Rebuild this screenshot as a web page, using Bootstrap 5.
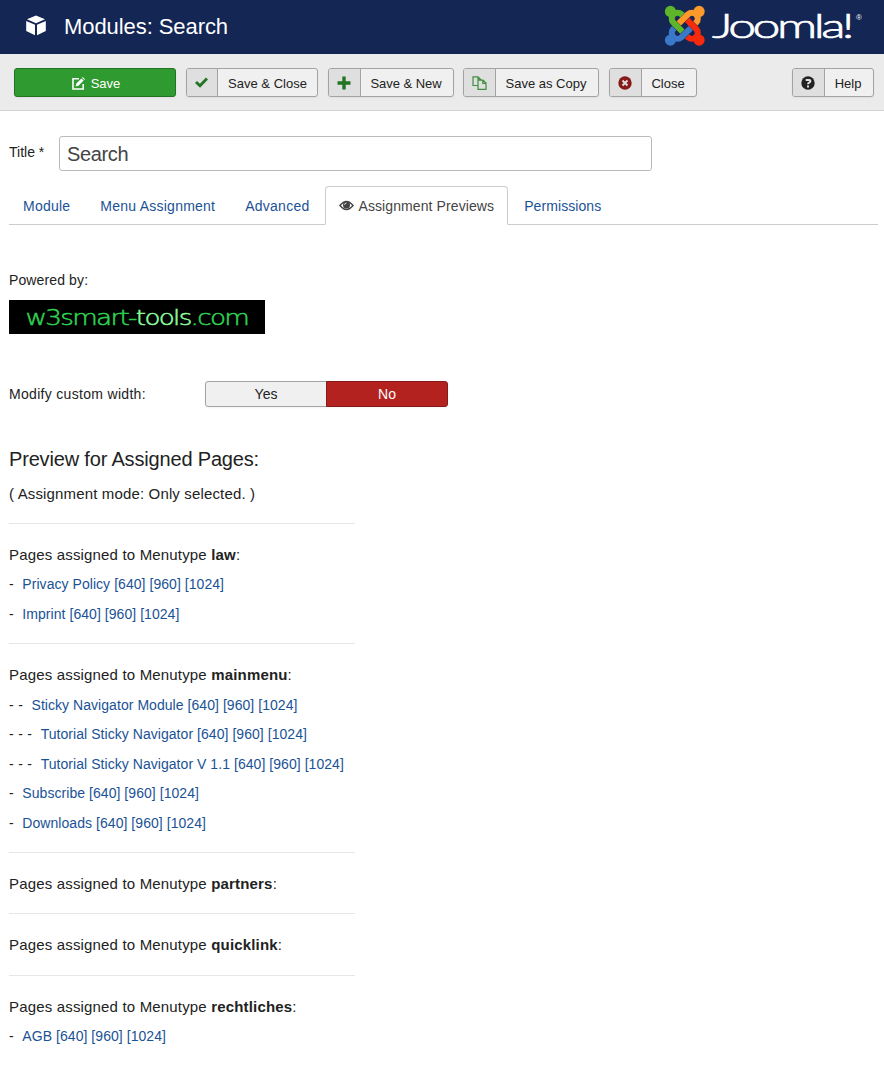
<!DOCTYPE html>
<html lang="en">
<head>
<meta charset="utf-8">
<meta name="viewport" content="width=device-width, initial-scale=1">
<title>Modules: Search</title>
<link href="https://cdn.jsdelivr.net/npm/bootstrap@5.3.0/dist/css/bootstrap.min.css" rel="stylesheet">
<style>
body{font-family:"Liberation Sans",Arial,sans-serif;font-size:14px;color:#222;background:#fff;overflow:hidden}
a{color:#1a5296;text-decoration:none}
svg{display:block}
.admin-header{height:54px;background:#142654;padding:0 22px 0 25px}
.admin-header h1{font-size:22px;color:#fff;line-height:54px;letter-spacing:-.07px;margin-left:18px}
.toolbar{height:57px;background:#ebebeb;border-bottom:1px solid #d3d3d3;padding:14px 10px 0 14px;gap:10px}
.tool{--bs-btn-font-size:13px;height:29px;padding:0;border:1px solid #a3a3a3;border-radius:3px;background:#f0f0f0;color:#222;display:flex;overflow:hidden;box-shadow:0 1px 2px rgba(0,0,0,.05);line-height:29px}
.tool .glyph{width:32px;background:#dfdfdf;border-right:1px solid #a3a3a3;display:flex;align-items:center;justify-content:center;padding-right:1px}
.tool .caption{flex:1;text-align:center;padding-right:2px}
.tool-save{width:162px;background:#2f9a2f;border-color:#237523;color:#fff;justify-content:center;align-items:center;gap:6px;padding:1px 0 0 2px}
.w-close2{width:132px}.w-new{width:126px;letter-spacing:-.05px}.w-copy{width:136px;margin-left:-1px}.w-close{width:88px}.w-help{width:82px}
.w-close2 .glyph{width:31px}
.w-close2 .caption{padding-right:0}
.title-row{padding:25px 0 0 9px}
.title-row label{width:50px;line-height:33px}
.title-row input{width:593px;height:35px;font-size:20px;color:#444;border:1px solid #bbb;border-radius:3px;padding:2px 7px 0;letter-spacing:-.35px}
.edit-tabs{margin:15px 6px 0 9px;height:39px;--bs-nav-tabs-border-color:#ccc;--bs-nav-tabs-border-radius:4px;gap:2px}
.edit-tabs .nav-link{height:39px;padding:0 13px;line-height:39px;color:#1a5296;letter-spacing:.24px}
.edit-tabs .nav-link.active{color:#444;border-color:#ccc #ccc #fff;display:flex;align-items:center;gap:4px;letter-spacing:.1px}
.edit-tabs .nav-link.active span{padding-top:2px}
.edit-tabs li:last-child .nav-link{letter-spacing:.08px}
.pane{padding:0 9px}
.powered{margin-top:45px;line-height:21px;letter-spacing:.12px}
.brand-strip{width:256px;height:34px;margin-top:9px;background:#000}
.width-row{margin-top:47px;line-height:26px}
.width-row .lbl{width:196px;letter-spacing:.31px}
.switch-pair{width:243px;height:26px;border-radius:3px;box-shadow:0 1px 2px rgba(0,0,0,.05)}
.switch-pair .btn{--bs-btn-font-size:14px;padding:0;line-height:25px;border-radius:3px;width:121px}
.opt-yes{background:#f0f0f0;border:1px solid #a3a3a3;color:#222}
.opt-no{background:#b3221f;border:1px solid #861a17;color:#fff}
.pane h2{font-size:20px;line-height:24px;margin:40px 0 0;letter-spacing:-.17px}
.mode{font-size:15px;line-height:22px;margin:12px 0 17.700px;letter-spacing:.15px}
.menu-group{width:346px;border-top:1px solid #e6e6e6;padding:16px 0 14.900px;line-height:29.500px}
.menu-group h3{font-size:15px;font-weight:400;line-height:29.500px;margin:0;letter-spacing:.17px}
.menu-group ul{margin:1px 0 -1px}
.menu-group li{white-space:pre;height:29.500px;letter-spacing:.05px}
.menu-group li i{font-style:normal;letter-spacing:.3px}
</style>
</head>
<body>
<header class="admin-header d-flex align-items-center">
  <svg width="21" height="21" viewBox="0 0 21 21" fill="#fff" style="margin-top:-4px"><path d="M11 .5l9 3.700-9 4-9-4zM1.200 6l8.800 3.700v10.500L1.200 16zM20.800 6L12 9.700v10.500l8.800-4.200z"/></svg>
  <h1 class="my-0">Modules: Search</h1>
  <svg class="ms-auto" width="198" height="54" viewBox="0 0 198 54" role="img" aria-label="Joomla!">
    <g transform="translate(1 6) scale(1.647)" fill="none" stroke-width="3.700">
      <g stroke="#5fb52a"><path d="M10.600 5.600L10 5a3.540 3.540 0 0 0-5 5l5.600 5.600"/><circle cx="3.300" cy="3.300" r="3.400" fill="#5fb52a" stroke="none"/></g>
      <g stroke="#fb9a2a" transform="rotate(90 12 12)"><path d="M10.600 5.600L10 5a3.540 3.540 0 0 0-5 5l5.600 5.600"/><circle cx="3.300" cy="3.300" r="3.400" fill="#fb9a2a" stroke="none"/></g>
      <g stroke="#f9290b" transform="rotate(180 12 12)"><path d="M10.600 5.600L10 5a3.540 3.540 0 0 0-5 5l5.600 5.600"/><circle cx="3.300" cy="3.300" r="3.400" fill="#f9290b" stroke="none"/></g>
      <g stroke="#3c78c8" transform="rotate(270 12 12)"><path d="M10.600 5.600L10 5a3.540 3.540 0 0 0-5 5l5.600 5.600"/><circle cx="3.300" cy="3.300" r="3.400" fill="#3c78c8" stroke="none"/></g>
    </g>
    <g fill="#fff" stroke="#fff">
      <text transform="translate(48 38) scale(1.470 1)" font-family="Lato,sans-serif" font-weight="300" font-size="34" stroke-width=".7" textLength="97" lengthAdjust="spacing">Joomla!</text>
      <text x="192" y="20" font-family="Liberation Sans,sans-serif" font-size="8" stroke="none">®</text>
    </g>
  </svg>
</header>

<div class="toolbar d-flex">
  <button class="btn tool tool-save"><svg width="13" height="13" viewBox="0 0 13 13"><path d="M7 1.800H1v10.200h10.200V7" fill="none" stroke="#fff" stroke-width="1.600"/><path d="M3.500 9.500l.8-3L9.400 1.400l2.200 2.200-5.100 5.100zM10 .8l.8-.8L13 2.200l-.8.800z" fill="#fff"/></svg>Save</button>
  <button class="btn tool w-close2"><span class="glyph"><svg width="13" height="12" viewBox="0 0 13 12"><path d="M1 5l4 3.700L12 1.500" fill="none" stroke="#237523" stroke-width="2.900"/></svg></span><span class="caption">Save &amp; Close</span></button>
  <button class="btn tool w-new"><span class="glyph"><svg width="14" height="14" viewBox="0 0 14 14"><path d="M7 .5v13M.5 7h13" stroke="#237523" stroke-width="3.400"/></svg></span><span class="caption">Save &amp; New</span></button>
  <button class="btn tool w-copy"><span class="glyph"><svg width="15" height="14" viewBox="0 0 15 14" fill="none" stroke="#3f8f3f" stroke-width="1.200"><path d="M5.800 9.500H1V.8h5l2.700 2.700v.8M6 .8v3h2.700M6 13.300V4.200h5l3 2.800v6.300zM10.800 4.200V7.300H14"/></svg></span><span class="caption">Save as Copy</span></button>
  <button class="btn tool w-close"><span class="glyph"><svg width="14" height="14" viewBox="0 0 14 14"><circle cx="7" cy="7" r="6.700" fill="#861a17"/><path d="M4.500 4.500l5 5m0-5l-5 5" stroke="#dfdfdf" stroke-width="2"/></svg></span><span class="caption">Close</span></button>
  <button class="btn tool w-help ms-auto"><span class="glyph"><svg width="14" height="14" viewBox="0 0 14 14"><circle cx="7" cy="7" r="6.700" fill="#222"/><path d="M4.700 4h3.500q1.200 0 1.200 1t-1.200 1.600q-1.200.4-1.200 1.700M7 9.500v2" fill="none" stroke="#dfdfdf" stroke-width="2"/></svg></span><span class="caption">Help</span></button>
</div>

<main>
  <div class="title-row d-flex">
    <label for="title">Title *</label>
    <input id="title" type="text" value="Search">
  </div>
  <ul class="nav nav-tabs edit-tabs flex-nowrap">
    <li class="nav-item"><a class="nav-link" href="#">Module</a></li>
    <li class="nav-item"><a class="nav-link" href="#">Menu Assignment</a></li>
    <li class="nav-item"><a class="nav-link" href="#">Advanced</a></li>
    <li class="nav-item"><a class="nav-link active" href="#"><svg width="15" height="11" viewBox="0 0 15 11"><path d="M1 5.500Q7.500-2.500 14 5.500 7.500 13.500 1 5.500z" fill="#fff" stroke="#444" stroke-width="1.500"/><circle cx="7.500" cy="5" r="3.500" fill="#444"/><path d="M5.600 4.700Q5.800 3.100 7.400 3" stroke="#fff" fill="none"/></svg><span>Assignment Previews</span></a></li>
    <li class="nav-item"><a class="nav-link" href="#">Permissions</a></li>
  </ul>

  <section class="pane">
    <div class="powered">Powered by:</div>
    <div class="brand-strip">
      <svg width="256" height="34" viewBox="0 0 256 34"><text transform="translate(16.500 25) scale(1.250 1)" font-family="DejaVu Sans,sans-serif" font-weight="200" font-size="21" fill="#2fd351" stroke="#2fd351" stroke-width=".5" textLength="179.500" lengthAdjust="spacing">w3smart-<tspan fill="#8dfc9c" stroke="#8dfc9c">tools</tspan>.com</text></svg>
    </div>
    <div class="width-row d-flex">
      <span class="lbl">Modify custom width:</span>
      <div class="btn-group switch-pair"><button class="btn opt-yes">Yes</button><button class="btn opt-no">No</button></div>
    </div>
    <h2 class="fw-normal">Preview for Assigned Pages:</h2>
    <p class="mode">( Assignment mode: Only selected. )</p>

    <div class="menu-group">
      <h3>Pages assigned to Menutype <b>law</b>:</h3>
      <ul class="list-unstyled">
        <li><i>-  </i><a href="#">Privacy Policy</a> <a href="#">[640]</a> <a href="#">[960]</a> <a href="#">[1024]</a></li>
        <li><i>-  </i><a href="#">Imprint</a> <a href="#">[640]</a> <a href="#">[960]</a> <a href="#">[1024]</a></li>
      </ul>
    </div>
    <div class="menu-group">
      <h3>Pages assigned to Menutype <b>mainmenu</b>:</h3>
      <ul class="list-unstyled">
        <li><i>- -  </i><a href="#">Sticky Navigator Module</a> <a href="#">[640]</a> <a href="#">[960]</a> <a href="#">[1024]</a></li>
        <li><i>- - -  </i><a href="#">Tutorial Sticky Navigator</a> <a href="#">[640]</a> <a href="#">[960]</a> <a href="#">[1024]</a></li>
        <li><i>- - -  </i><a href="#">Tutorial Sticky Navigator V 1.1</a> <a href="#">[640]</a> <a href="#">[960]</a> <a href="#">[1024]</a></li>
        <li><i>-  </i><a href="#">Subscribe</a> <a href="#">[640]</a> <a href="#">[960]</a> <a href="#">[1024]</a></li>
        <li><i>-  </i><a href="#">Downloads</a> <a href="#">[640]</a> <a href="#">[960]</a> <a href="#">[1024]</a></li>
      </ul>
    </div>
    <div class="menu-group"><h3>Pages assigned to Menutype <b>partners</b>:</h3></div>
    <div class="menu-group"><h3>Pages assigned to Menutype <b>quicklink</b>:</h3></div>
    <div class="menu-group">
      <h3>Pages assigned to Menutype <b>rechtliches</b>:</h3>
      <ul class="list-unstyled">
        <li><i>-  </i><a href="#">AGB</a> <a href="#">[640]</a> <a href="#">[960]</a> <a href="#">[1024]</a></li>
      </ul>
    </div>
  </section>
</main>
<script src="https://cdn.jsdelivr.net/npm/bootstrap@5.3.0/dist/js/bootstrap.bundle.min.js"></script>
</body>
</html>
